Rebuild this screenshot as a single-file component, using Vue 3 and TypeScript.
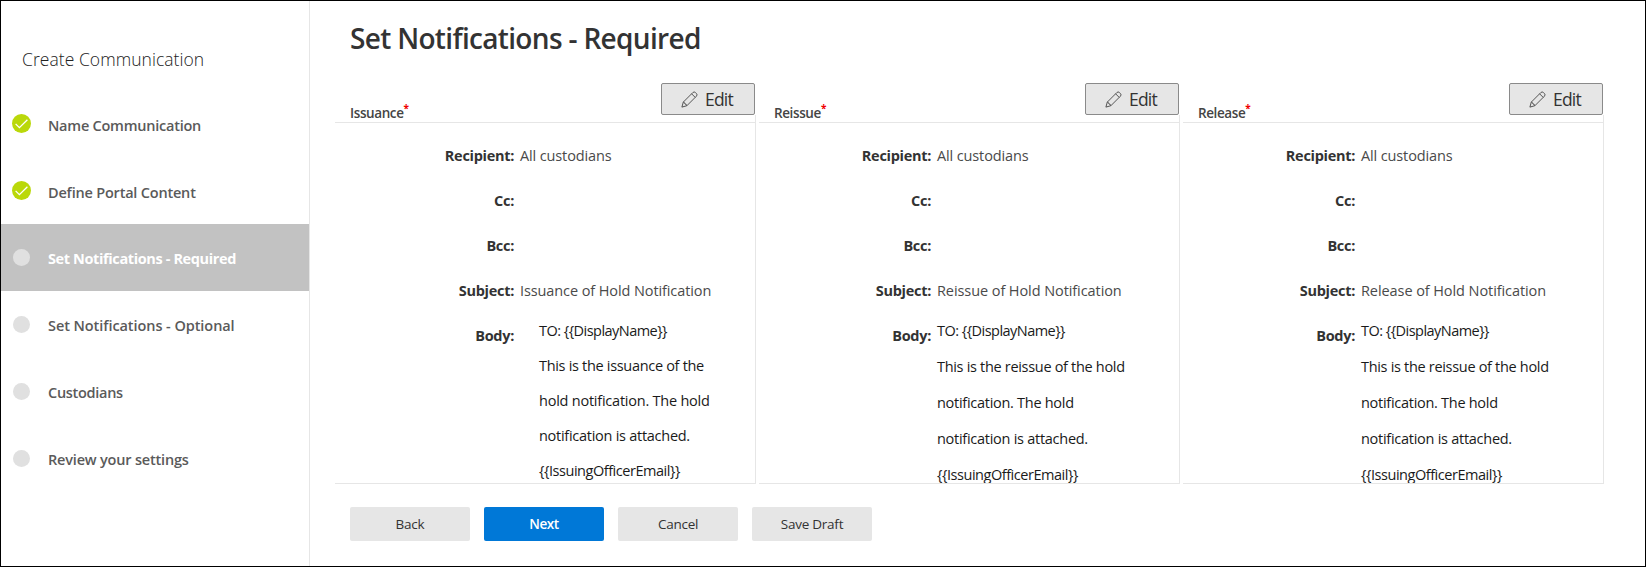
<script setup lang="ts">
interface Line { text: string; ls: number }
interface Step { label: string; state: 'done' | 'active' | 'todo'; ls: number }
interface Card { name: string; kind: string; subject: Line; body: Line[] }

const steps: Step[] = [
  { label: 'Name Communication', state: 'done', ls: -0.24 },
  { label: 'Define Portal Content', state: 'done', ls: -0.2 },
  { label: 'Set Notifications - Required', state: 'active', ls: -0.38 },
  { label: 'Set Notifications - Optional', state: 'todo', ls: -0.07 },
  { label: 'Custodians', state: 'todo', ls: -0.3 },
  { label: 'Review your settings', state: 'todo', ls: -0.19 },
]

const reissueBody: Line[] = [
  { text: 'TO: {{DisplayName}}', ls: -0.53 },
  { text: 'This is the reissue of the hold', ls: -0.31 },
  { text: 'notification. The hold', ls: -0.28 },
  { text: 'notification is attached.', ls: -0.27 },
  { text: '{{IssuingOfficerEmail}}', ls: -0.46 },
]

const cards: Card[] = [
  {
    name: 'Issuance',
    kind: 'issuance',
    subject: { text: 'Issuance of Hold Notification', ls: -0.1 },
    body: [
      { text: 'TO: {{DisplayName}}', ls: -0.53 },
      { text: 'This is the issuance of the', ls: -0.31 },
      { text: 'hold notification. The hold', ls: -0.23 },
      { text: 'notification is attached.', ls: -0.27 },
      { text: '{{IssuingOfficerEmail}}', ls: -0.46 },
    ],
  },
  { name: 'Reissue', kind: 'reissue', subject: { text: 'Reissue of Hold Notification', ls: -0.08 }, body: reissueBody },
  { name: 'Release', kind: 'release', subject: { text: 'Release of Hold Notification', ls: -0.08 }, body: reissueBody },
]

const actions = [
  { label: 'Back', primary: false },
  { label: 'Next', primary: true },
  { label: 'Cancel', primary: false },
  { label: 'Save Draft', primary: false },
]
</script>

<template>
  <div class="wizard">
    <nav class="sidebar">
      <div class="sidebar-title">Create Communication</div>
      <div v-for="s in steps" :key="s.label" class="step" :class="s.state">
        <span class="marker">
          <svg v-if="s.state === 'done'" width="19" height="19" viewBox="0 0 19 19">
            <circle cx="9.5" cy="9.5" r="9.5" fill="#bad80a" />
            <path d="M3.6 9.9l3.8 3.8 8-8" fill="none" stroke="#fff" stroke-width="1.3" />
          </svg>
          <span v-else class="dot"></span>
        </span>
        <span class="step-label" :style="{ letterSpacing: s.ls + 'px' }">{{ s.label }}</span>
      </div>
    </nav>

    <main class="content">
      <h1>Set Notifications - Required</h1>
      <div class="cards">
        <section v-for="c in cards" :key="c.name" class="card" :class="c.kind">
          <header class="card-head">
            <div class="card-name">{{ c.name }}<span class="req">*</span></div>
            <button class="edit">
              <svg width="17" height="17" viewBox="0 0 17 17" fill="none" stroke="#444" stroke-width="0.9">
                <path d="M.9 16.1l1.4-5L11.8 1.6a1.9 1.9 0 0 1 2.7 0l.9.9a1.9 1.9 0 0 1 0 2.7L5.9 14.7z" />
                <path d="M10.6 2.8l3.6 3.6M2.3 11.1q1.6.2 1.7 1.9 1.7.1 1.9 1.7" />
              </svg>
              <span>Edit</span>
            </button>
          </header>
          <div class="card-body">
            <div class="fields">
              <div class="label">Recipient:</div>
              <div class="value">All custodians</div>
              <div class="label">Cc:</div>
              <div class="value"></div>
              <div class="label">Bcc:</div>
              <div class="value"></div>
              <div class="label">Subject:</div>
              <div class="value" :style="{ letterSpacing: c.subject.ls + 'px' }">{{ c.subject.text }}</div>
              <div class="label">Body:</div>
              <div class="message">
                <div v-for="l in c.body" :key="l.text" :style="{ letterSpacing: l.ls + 'px' }">{{ l.text }}</div>
              </div>
            </div>
          </div>
        </section>
      </div>
      <footer class="actions">
        <button v-for="a in actions" :key="a.label" :class="{ primary: a.primary }">{{ a.label }}</button>
      </footer>
    </main>
  </div>
</template>

<style>
body { margin: 0; background: #fff; }
</style>

<style scoped>
.wizard {
  box-sizing: border-box;
  width: 1646px;
  height: 567px;
  border: 1px solid #000;
  display: flex;
  overflow: hidden;
  background: #fff;
  color: #333;
  font-family: "Open Sans", "Noto Sans", sans-serif;
}
.wizard button {
  font-family: inherit;
  padding: 0;
  margin: 0;
}
.sidebar {
  flex: none;
  width: 308px;
  border-right: 1px solid #e6e6e6;
}
.sidebar-title {
  height: 41px;
  padding: 48px 0 0 21px;
  font-size: 17.5px;
  font-weight: 300;
  line-height: 20px;
  color: #222;
  letter-spacing: 0.05px;
}
.step {
  height: 67px;
  display: flex;
  align-items: center;
  font-size: 14.5px;
  font-weight: 600;
  color: #5a5a5a;
}
.step.active {
  background: #c2c2c2;
  color: #fff;
  font-weight: 700;
}
.marker {
  width: 19px;
  margin: 0 17px 0 11px;
  display: flex;
  justify-content: center;
}
.marker svg {
  display: block;
}
.dot {
  width: 17px;
  height: 17px;
  border-radius: 50%;
  background: #e0e0e0;
}
.step-label {
  line-height: 20px;
  padding-top: 3px;
  white-space: nowrap;
}
.done .step-label {
  padding-top: 4px;
}
.content {
  flex: none;
  padding: 18px 0 0 25px;
}
h1 {
  margin: 0 0 26px 15px;
  font-size: 28px;
  font-weight: 600;
  line-height: 38px;
  letter-spacing: -0.67px;
}
.cards {
  display: flex;
  gap: 3px;
}
.card {
  width: 421px;
}
.card-head {
  height: 32px;
  display: flex;
  align-items: flex-start;
  justify-content: space-between;
  padding: 0 1px 0 15px;
}
.card-name {
  margin-top: 21px;
  font-size: 13.5px;
  font-weight: 600;
  line-height: 18px;
  letter-spacing: -0.4px;
  color: #444;
  display: flex;
}
.req {
  color: #f00000;
  font-size: 10px;
  font-weight: 700;
  line-height: 9px;
}
.edit {
  box-sizing: border-box;
  width: 94px;
  height: 32px;
  border: 1px solid #8a8a8a;
  border-radius: 2px;
  background: #e6e6e6;
  color: #333;
  display: flex;
  align-items: center;
  font-size: 17.5px;
  font-weight: 400;
  letter-spacing: -0.8px;
}
.edit svg {
  margin: 0 7px 0 19px;
}
.card-body {
  box-sizing: border-box;
  height: 369px;
  padding-top: 7px;
  border-right: 1px solid #e6e6e6;
  border-bottom: 1px solid #e6e6e6;
  overflow: hidden;
}
.fields {
  border-top: 1px solid #e6e6e6;
  padding-top: 10px;
  display: grid;
  grid-template-columns: 173px 1fr;
  grid-auto-rows: 45px;
  column-gap: 5px;
  font-size: 14.5px;
  line-height: 45px;
  white-space: nowrap;
}
.issuance .fields {
  grid-template-columns: 180px 1fr;
}
.label {
  text-align: right;
  padding-right: 1px;
  font-weight: 700;
  letter-spacing: -0.3px;
}
.value {
  font-weight: 400;
  color: #4a4a4a;
  letter-spacing: -0.13px;
}
.message {
  line-height: 36px;
  font-weight: 400;
  color: #1a1a1a;
}
.issuance .message {
  line-height: 35px;
  padding-left: 19px;
}
.actions {
  display: flex;
  gap: 14px;
  margin: 23px 0 0 15px;
}
.actions button {
  width: 120px;
  height: 34px;
  border: 0;
  border-radius: 2px;
  background: #e6e6e6;
  color: #333;
  font-size: 13.5px;
  font-weight: 400;
  letter-spacing: -0.25px;
}
.actions button.primary {
  background: #0078d7;
  color: #fff;
  font-weight: 600;
  letter-spacing: -0.4px;
}
</style>
